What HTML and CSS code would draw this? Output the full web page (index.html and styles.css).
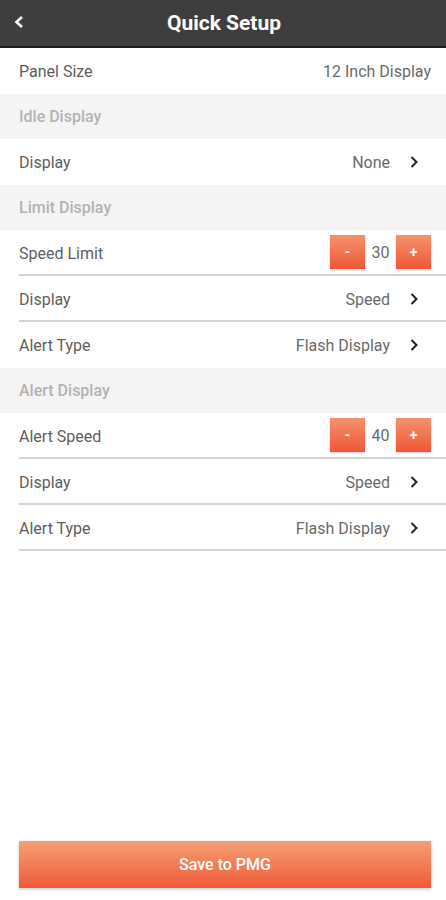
FILE: index.html
```html
<!DOCTYPE html>
<html lang="en">
<head>
  <meta charset="UTF-8">
  <meta name="viewport" content="width=device-width, initial-scale=1.0">
  <title>Quick Setup</title>
  <link rel="stylesheet" href="styles.css">
</head>
<body>
<div class="app">
  <!-- top bar -->
  <div class="topbar">
    <span class="back">
      <svg width="12" height="14" viewBox="0 0 12 14"><path d="M9 2 L3.5 7 L9 12" fill="none" stroke="#fff" stroke-width="2.6"/></svg>
    </span>
    <div class="title">Quick Setup</div>
  </div>

  <div class="list">
    <div class="row">
      <span class="label">Panel Size</span>
      <span class="value">12 Inch Display</span>
    </div>

    <div class="section">Idle Display</div>
    <div class="row">
      <span class="label">Display</span>
      <span class="value">None</span>
      <span class="chev"><svg width="10" height="14" viewBox="0 0 10 14"><path d="M2.5 2 L7.5 7 L2.5 12" fill="none" stroke="#222" stroke-width="2"/></svg></span>
    </div>

    <div class="section">Limit Display</div>
    <div class="row line">
      <span class="label">Speed Limit</span>
      <div class="stepper">
        <button class="step">-</button>
        <span class="num">30</span>
        <button class="step">+</button>
      </div>
    </div>
    <div class="row line">
      <span class="label">Display</span>
      <span class="value">Speed</span>
      <span class="chev"><svg width="10" height="14" viewBox="0 0 10 14"><path d="M2.5 2 L7.5 7 L2.5 12" fill="none" stroke="#222" stroke-width="2"/></svg></span>
    </div>
    <div class="row">
      <span class="label">Alert Type</span>
      <span class="value">Flash Display</span>
      <span class="chev"><svg width="10" height="14" viewBox="0 0 10 14"><path d="M2.5 2 L7.5 7 L2.5 12" fill="none" stroke="#222" stroke-width="2"/></svg></span>
    </div>

    <div class="section">Alert Display</div>
    <div class="row line">
      <span class="label">Alert Speed</span>
      <div class="stepper">
        <button class="step">-</button>
        <span class="num">40</span>
        <button class="step">+</button>
      </div>
    </div>
    <div class="row line">
      <span class="label">Display</span>
      <span class="value">Speed</span>
      <span class="chev"><svg width="10" height="14" viewBox="0 0 10 14"><path d="M2.5 2 L7.5 7 L2.5 12" fill="none" stroke="#222" stroke-width="2"/></svg></span>
    </div>
    <div class="row line">
      <span class="label">Alert Type</span>
      <span class="value">Flash Display</span>
      <span class="chev"><svg width="10" height="14" viewBox="0 0 10 14"><path d="M2.5 2 L7.5 7 L2.5 12" fill="none" stroke="#222" stroke-width="2"/></svg></span>
    </div>
  </div>

  <div class="footer">
    <button class="save">Save to PMG</button>
  </div>
</div>
</body>
</html>
```

FILE: styles.css
```css
html, body {
  margin: 0;
  padding: 0;
  background: #fff;
  font-family: Roboto, "Liberation Sans", sans-serif;
}
.app {
  display: flex;
  flex-direction: column;
  height: 900px;
}
.topbar {
  height: 46px;
  background: #3e3e3e;
  border-bottom: 2px solid #1e1e1e;
  display: flex;
  align-items: center;
  justify-content: center;
  position: relative;
}
.topbar .back {
  position: absolute;
  left: 13px;
  top: 14px;
}
.title {
  color: #fff;
  font-size: 21px;
  font-weight: 700;
  margin-left: 2px;
}
.list {
  flex: 1;
}
.row {
  height: 46px;
  display: flex;
  align-items: center;
  padding: 0 15px 0 19px;
  color: #5e5e5e;
  font-size: 16px;
}
.row.line {
  position: relative;
}
.row.line::after {
  content: "";
  position: absolute;
  left: 19px;
  right: 0;
  bottom: 0;
  height: 2px;
  background: #d4d4d4;
}
.label {
  flex: 1;
}
.value {
  color: #6a6a6a;
}
.chev {
  width: 29px;
  display: flex;
  justify-content: flex-end;
  margin-right: 12px;
}
.section {
  height: 45px;
  display: flex;
  align-items: center;
  padding-left: 19px;
  background: #f4f4f4;
  color: #b3b3b3;
  font-size: 16px;
  font-weight: 500;
}
.stepper {
  display: flex;
  align-items: center;
  margin-bottom: 2px;
}
.step {
  width: 35px;
  height: 34px;
  border: none;
  padding: 0;
  color: #fff;
  font-family: Roboto, "Liberation Sans", sans-serif;
  font-size: 14px;
  font-weight: 700;
  background: linear-gradient(#f5936c, #ee5637);
  box-shadow: 0 1px 2px rgba(0,0,0,0.2);
}
.num {
  width: 31px;
  text-align: center;
  color: #6a6a6a;
  font-size: 16px;
}
.footer {
  padding: 0 15px 12px 19px;
}
.save {
  width: 100%;
  height: 47px;
  border: none;
  color: #fff;
  font-family: Roboto, "Liberation Sans", sans-serif;
  font-size: 16px;
  font-weight: 500;
  background: linear-gradient(#f6a073, #ef5a3a);
  box-shadow: 0 1px 3px rgba(0,0,0,0.25);
}
```
